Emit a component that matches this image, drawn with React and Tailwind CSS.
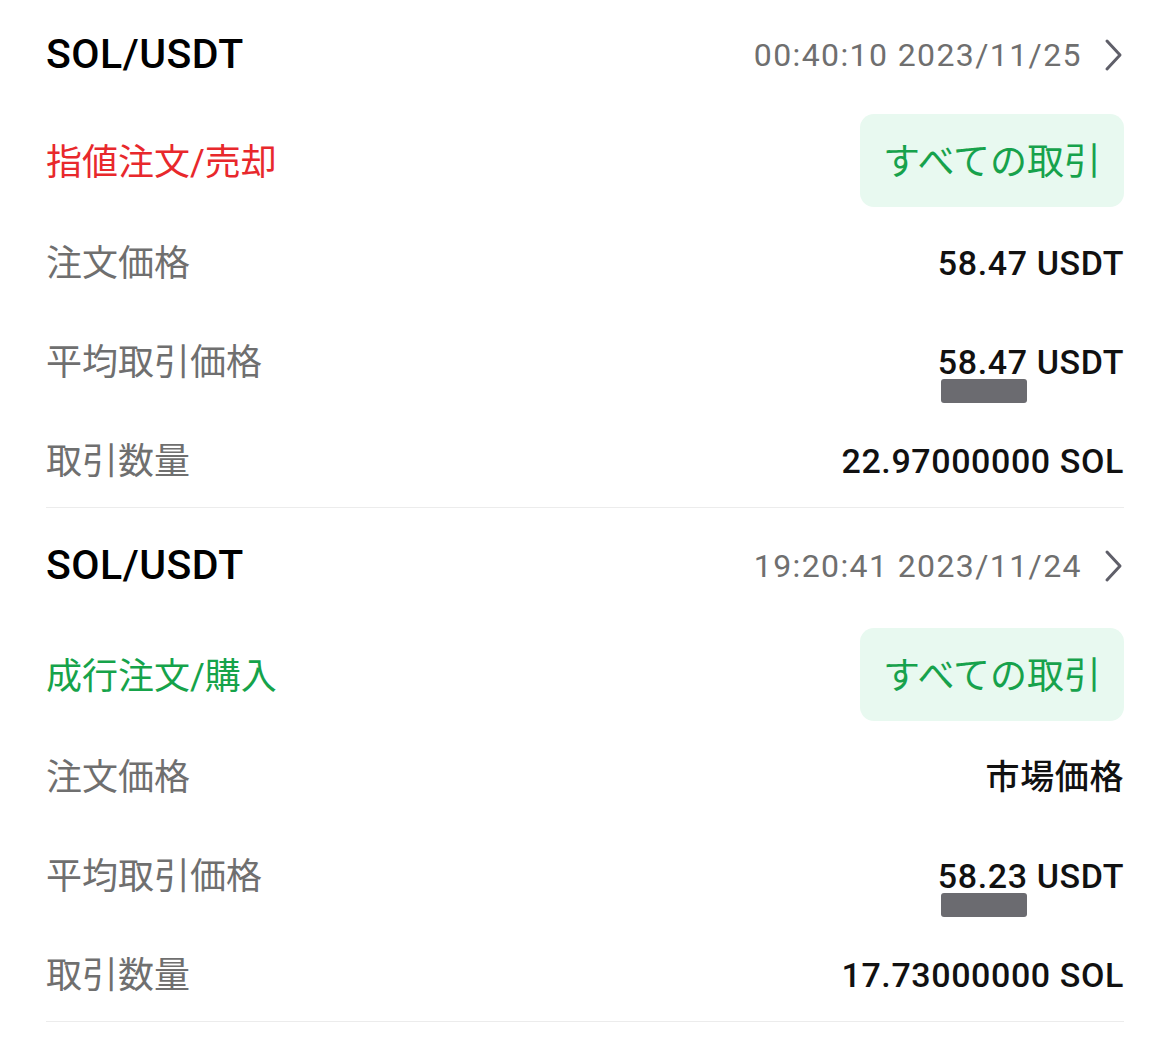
import React from "react";

const orders = [
  {
    pair: "SOL/USDT",
    time: "00:40:10 2023/11/25",
    type: "指値注文/売却",
    side: "sell",
    price: "58.47 USDT",
    avg: "58.47 USDT",
    qty: "22.97000000 SOL",
  },
  {
    pair: "SOL/USDT",
    time: "19:20:41 2023/11/24",
    type: "成行注文/購入",
    side: "buy",
    price: "市場価格",
    avg: "58.23 USDT",
    qty: "17.73000000 SOL",
  },
];

const Chevron = () => (
  <svg width="22" height="34" viewBox="0 0 22 34" fill="none">
    <path
      d="M5 3 L18 17 L5 31"
      stroke="#5f5f69"
      strokeWidth="3"
      strokeLinecap="round"
      strokeLinejoin="round"
    />
  </svg>
);

const Row = ({ label, value, masked }) => (
  <div className="h-[99px] pt-[8px] flex items-center justify-between">
    <span className="text-[36px] text-[#6f6f6f]">{label}</span>
    <span className="relative text-[34px] font-medium text-[#111111] tracking-[0.6px]">
      {value}
      {/* REDACTION MARK */}
      {masked && (
        <span className="absolute left-[3px] top-[42px] w-[86px] h-[24px] rounded-[3px] bg-[#6b6b70]" />
      )}
    </span>
  </div>
);

const OrderCard = ({ order, first }) => (
  <div className="border-b border-[#ececec]">
    {/* HEADER */}
    <div
      className={`flex items-center justify-between ${
        first ? "h-[110px]" : "h-[116px]"
      }`}
    >
      <span className="text-[41px] font-medium text-black tracking-[0.5px]">
        {order.pair}
      </span>
      <div className="flex items-center gap-[20px]">
        <span className="text-[32px] text-[#6f6f6f] tracking-[1.4px]">
          {order.time}
        </span>
        <Chevron />
      </div>
    </div>

    {/* TYPE + BUTTON */}
    <div className="mt-[4px] h-[93px] flex items-center justify-between">
      <span
        className={`text-[36px] pt-[4px] ${
          order.side === "sell" ? "text-[#e8282c]" : "text-[#16a34a]"
        }`}
      >
        {order.type}
      </span>
      <button className="h-[93px] w-[264px] rounded-[14px] bg-[#e8f9f0] text-[37px] text-[#17a24c] flex items-center justify-center pt-[4px]">
        すべての取引
      </button>
    </div>

    {/* DETAILS */}
    <div className="mt-[3px]">
      <Row label="注文価格" value={order.price} />
      <Row label="平均取引価格" value={order.avg} masked />
      <Row label="取引数量" value={order.qty} />
    </div>
  </div>
);

export default function App() {
  return (
    <div
      className="w-[1170px] h-[1046px] overflow-hidden bg-white px-[46px]"
      style={{ fontFamily: 'Roboto, "Noto Sans CJK JP", sans-serif' }}
    >
      {orders.map((o, i) => (
        <OrderCard key={i} order={o} first={i === 0} />
      ))}
    </div>
  );
}
